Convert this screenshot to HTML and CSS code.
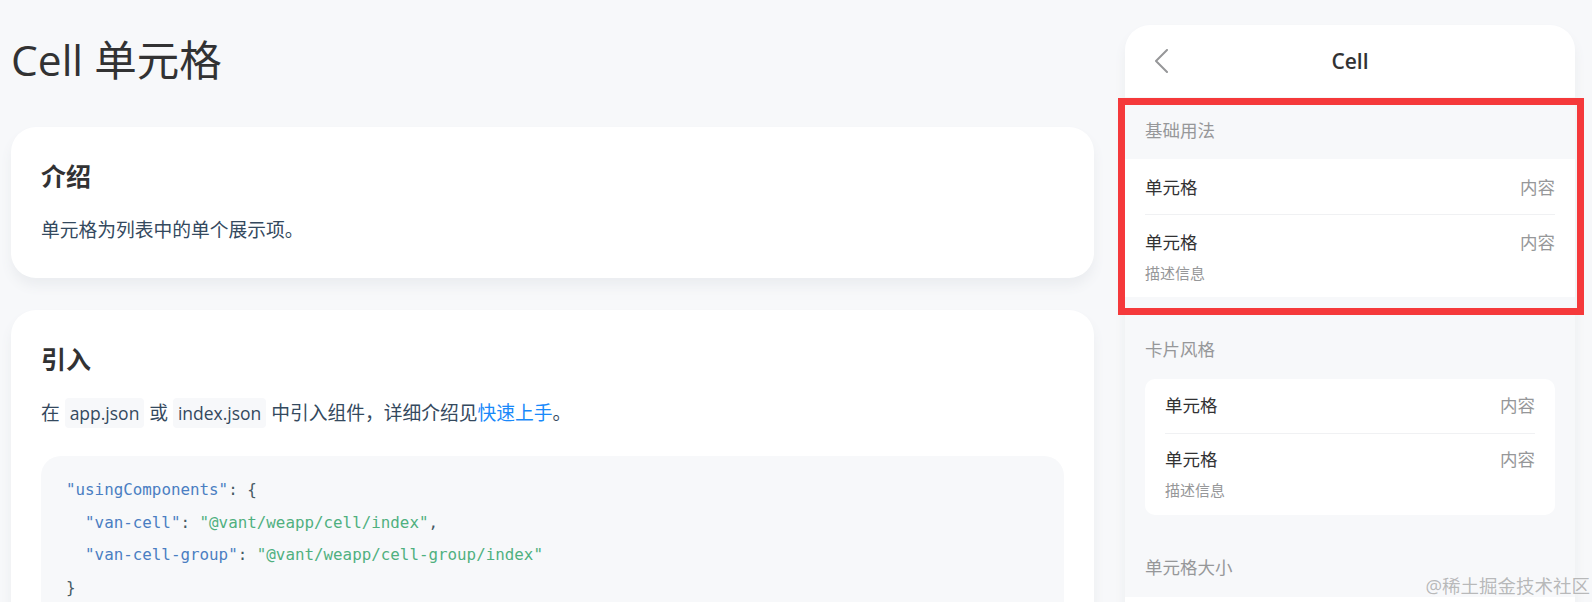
FILE: index.html
```html
<!DOCTYPE html>
<html lang="zh-CN">
<head>
<meta charset="utf-8">
<title>Cell 单元格</title>
<link rel="stylesheet" href="styles.css">
</head>
<body>
<div class="page">
  <main class="doc">
    <h1 class="doc-title">Cell 单元格</h1>
    <section class="card">
      <h3>介绍</h3>
      <p>单元格为列表中的单个展示项。</p>
    </section>
    <section class="card">
      <h3>引入</h3>
      <p>在 <code>app.json</code> 或 <code>index.json</code> 中引入组件，详细介绍见<a class="link">快速上手</a>。</p>
      <div class="code">
        <div class="line"><span class="k">"usingComponents"</span><span class="p">: {</span></div>
        <div class="line indent"><span class="k">"van-cell"</span><span class="p">: </span><span class="s">"@vant/weapp/cell/index"</span><span class="p">,</span></div>
        <div class="line indent"><span class="k">"van-cell-group"</span><span class="p">: </span><span class="s">"@vant/weapp/cell-group/index"</span></div>
        <div class="line"><span class="p">}</span></div>
      </div>
    </section>
  </main>

  <aside class="phone">
    <div class="nav">
      <svg class="nav-back" viewBox="0 0 16 24" width="16" height="24"><polyline points="14,1 3,12 14,23" fill="none" stroke="#969799" stroke-width="2" stroke-linecap="round" stroke-linejoin="round"/></svg>
      <span class="nav-title">Cell</span>
    </div>
    <div class="group-title first">基础用法</div>
    <div class="group">
      <div class="cell"><div class="cell-main"><div class="cell-title">单元格</div></div><div class="cell-value">内容</div></div>
      <div class="cell"><div class="cell-main"><div class="cell-title">单元格</div><div class="cell-label">描述信息</div></div><div class="cell-value">内容</div></div>
    </div>
    <div class="group-title">卡片风格</div>
    <div class="group inset">
      <div class="cell"><div class="cell-main"><div class="cell-title">单元格</div></div><div class="cell-value">内容</div></div>
      <div class="cell"><div class="cell-main"><div class="cell-title">单元格</div><div class="cell-label">描述信息</div></div><div class="cell-value">内容</div></div>
    </div>
    <div class="group-title">单元格大小</div>
    <div class="group tail"></div>
  </aside>

  <div class="highlight"></div>
  <div class="watermark">@稀土掘金技术社区</div>
</div>
</body>
</html>
```

FILE: styles.css
```css
* { box-sizing: border-box; }
html, body { margin: 0; padding: 0; }
body {
  background: #f7f8fa;
  font-family: "Open Sans", "Noto Sans CJK SC", sans-serif;
  color: #323233;
  overflow: hidden;
}
.page {
  position: relative;
  display: flex;
  gap: 31px;
  padding: 0 17px 0 11px;
  height: 602px;
  overflow: hidden;
}
.doc { flex: 1; min-width: 0; }
.doc-title {
  margin: 0 0 36px;
  padding-top: 28px;
  font-size: 42.5px;
  line-height: 63px;
  font-weight: 400;
  color: #323233;
}
.card {
  background: #fff;
  border-radius: 25px;
  padding: 32px 30px 31px;
  box-shadow: 0 8px 12px #ebedf0;
}
.card + .card { margin-top: 32px; }
.card h3 {
  margin: 0 0 20px;
  font-size: 25px;
  line-height: 35px;
  font-weight: 700;
  color: #323233;
}
.card p {
  margin: 0;
  font-size: 18.75px;
  line-height: 32.5px;
  color: #34495e;
}
.card code {
  font-family: "Open Sans", "Noto Sans CJK SC", sans-serif;
  font-size: 17.5px;
  padding: 3px 5px;
  background: #f7f8fa;
  border-radius: 4px;
  color: #34495e;
}
.link { color: #1989fa; }
.code {
  margin: 27px 0 0;
  padding: 18px 25px;
  background: #f7f8fa;
  border-radius: 20px;
  font-family: "DejaVu Sans Mono", monospace;
  font-size: 15.85px;
  line-height: 32.5px;
  color: #455a64;
}
.code .line { white-space: pre; }
.code .indent { padding-left: 2ch; }
.code .k { color: #4a7ec2; }
.code .s { color: #4fb07f; }
.code .p { color: #455a64; }

.phone {
  flex: 0 0 450px;
  margin-top: 25px;
  height: 620px;
  background: #f7f8fa;
  border-radius: 25px;
  overflow: hidden;
  box-shadow: 0 8px 12px #ebedf0;
}
.nav {
  position: relative;
  height: 72px;
  background: #fff;
  display: flex;
  align-items: center;
  justify-content: center;
}
.nav-back { position: absolute; left: 28px; top: 24px; }
.nav-title { font-size: 21px; font-weight: 600; color: #323233; }
.group-title {
  padding: 42.5px 20px 20px;
  font-size: 17.5px;
  line-height: 20px;
  color: #969799;
}
.group-title.first { padding-top: 23px; padding-bottom: 19px; }
.group { background: #fff; }
.group.inset { margin: 0 20px; border-radius: 10px; overflow: hidden; }
.group.tail { height: 55px; }
.cell {
  position: relative;
  display: flex;
  justify-content: space-between;
  padding: 12.5px 20px;
  font-size: 17.5px;
  line-height: 30px;
}
.group.inset .cell { padding: 10.5px 20px 13.5px; }
.cell + .cell::before {
  content: "";
  position: absolute;
  left: 20px;
  right: 20px;
  top: 0;
  border-top: 1px solid #f0f1f3;
}
.cell-title { color: #323233; }
.cell-label {
  margin-top: 5px;
  font-size: 15px;
  line-height: 22.5px;
  color: #969799;
}
.cell-value { color: #969799; }

.highlight {
  position: absolute;
  left: 1118px;
  top: 98px;
  width: 466px;
  height: 217px;
  border: 7px solid #f5393b;
}
.watermark {
  position: absolute;
  right: 2px;
  top: 574px;
  font-size: 18.5px;
  line-height: 24px;
  color: rgba(130, 130, 130, 0.55);
}
```
